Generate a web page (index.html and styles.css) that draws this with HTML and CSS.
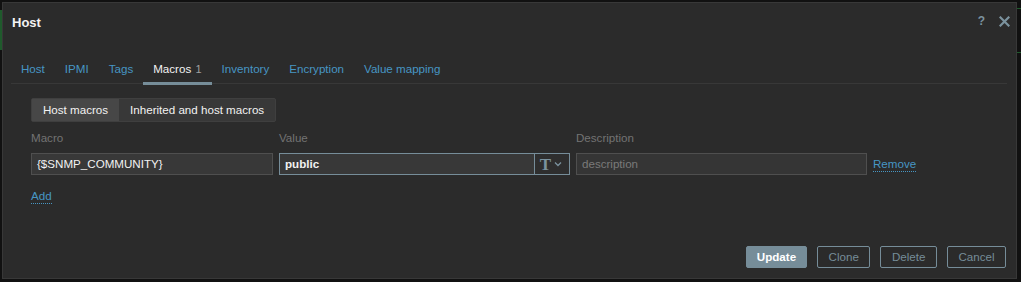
FILE: index.html
```html
<!DOCTYPE html>
<html>
<head>
<meta charset="utf-8">
<link rel="stylesheet" href="styles.css">
</head>
<body>
<div class="bg-line bg-left"></div>
<div class="bg-line bg-right1"></div>
<div class="bg-line bg-right2"></div>
<div class="dialog">
  <div class="header">
    <h4 class="title">Host</h4>
    <div class="header-ctrls">
      <span class="help">?</span>
      <svg class="close" width="11" height="11" viewBox="0 0 11 11"><path d="M1.5 1.5 L9.5 9.5 M9.5 1.5 L1.5 9.5" stroke="#7b929e" stroke-width="2.2" stroke-linecap="square"/></svg>
    </div>
  </div>
  <div class="body">
    <ul class="tabs">
      <li class="tab">Host</li>
      <li class="tab">IPMI</li>
      <li class="tab">Tags</li>
      <li class="tab active">Macros <span class="count">1</span></li>
      <li class="tab">Inventory</li>
      <li class="tab">Encryption</li>
      <li class="tab">Value mapping</li>
    </ul>
    <div class="form">
      <div class="segment">
        <span class="seg seg-on">Host macros</span>
        <span class="seg">Inherited and host macros</span>
      </div>
      <div class="macro-grid">
        <div class="lbl">Macro</div>
        <div class="lbl">Value</div>
        <div class="lbl">Description</div>
        <div></div>
        <div class="input">{$SNMP_COMMUNITY}</div>
        <div class="value-wrap">
          <div class="input value-input">public</div>
          <div class="type-btn">
            <span class="t-glyph">T</span>
            <svg width="8" height="6" viewBox="0 0 8 6"><path d="M1 1.5 L4 4.5 L7 1.5" fill="none" stroke="#7b929e" stroke-width="1.3"/></svg>
          </div>
        </div>
        <div class="input placeholder">description</div>
        <a class="link remove">Remove</a>
      </div>
      <a class="link add">Add</a>
    </div>
  </div>
  <div class="footer">
    <button class="btn primary">Update</button>
    <button class="btn">Clone</button>
    <button class="btn">Delete</button>
    <button class="btn">Cancel</button>
  </div>
</div>
</body>
</html>
```

FILE: styles.css
```css
* { box-sizing: border-box; }
html, body {
  margin: 0;
  padding: 0;
  background: #111111;
  width: 1021px;
  height: 282px;
  overflow: hidden;
  font-family: "Liberation Sans", Arial, sans-serif;
  font-size: 11.6px;
  color: #f2f2f2;
}
body { position: relative; padding: 2px 4px 3px 2px; }
.bg-line { position: absolute; background: #1f5a2c; }
.bg-left { left: 0; top: 10px; width: 2px; height: 40px; }
.bg-right1 { right: 0; top: 8px; width: 4px; height: 1px; }
.bg-right2 { right: 0; top: 52px; width: 4px; height: 1px; }

.dialog {
  position: relative;
  width: 1015px;
  height: 277px;
  background: #2b2b2b;
  border: 1px solid #383838;
  display: flex;
  flex-direction: column;
}
.header {
  display: flex;
  justify-content: space-between;
  align-items: flex-start;
  padding: 11px 6px 0 9px;
  height: 44px;
}
.title {
  margin: 0;
  font-size: 13px;
  font-weight: bold;
  color: #f2f2f2;
  line-height: 18px;
}
.header-ctrls {
  display: flex;
  align-items: center;
  gap: 14px;
  padding-top: 1px;
}
.help {
  color: #7b929e;
  font-size: 12px;
  font-weight: bold;
  line-height: 12px;
}
.close { display: block; }

.body {
  padding: 0 9px 0 8px;
  flex: 1;
}
.tabs {
  list-style: none;
  margin: 0;
  padding: 0;
  display: flex;
  border-bottom: 1px solid #383838;
  height: 37px;
}
.tab {
  padding: 14px 10px 0 10px;
  color: #4796c4;
  line-height: 16px;
  height: 37px;
}
.tab.active {
  color: #f2f2f2;
  border-bottom: 3px solid #768d99;
  height: 38px;
}
.count { color: #a0a0a0; font-size: 11px; margin-left: 1px; }

.form {
  padding: 14px 0 0 20px;
}
.segment {
  display: inline-flex;
  background: #383838;
  border: 1px solid #3f3f3f;
  border-radius: 2px;
  height: 24px;
}
.seg {
  padding: 0 11px;
  line-height: 22px;
  color: #f2f2f2;
}
.seg-on { background: #474747; }

.macro-grid {
  display: grid;
  grid-template-columns: 242px 291px 291px auto;
  column-gap: 6px;
  margin-top: 7px;
  align-items: center;
}
.lbl {
  color: #737373;
  line-height: 17px;
  margin-bottom: 7px;
}
.input {
  height: 22px;
  background: #383838;
  border: 1px solid #4f4f4f;
  padding: 0 5px;
  line-height: 20px;
  color: #f2f2f2;
  white-space: nowrap;
}
.placeholder { color: #7a7a7a; background: #353535; }
.value-wrap { display: flex; height: 22px; }
.value-input {
  flex: 1;
  border-color: #768d99;
  border-right: none;
  font-weight: bold;
}
.type-btn {
  width: 36px;
  height: 22px;
  border: 1px solid #768d99;
  background: #2e2e2e;
  display: flex;
  align-items: center;
  justify-content: center;
  gap: 3px;
  padding-right: 2px;
}
.t-glyph {
  font-family: "Liberation Serif", "Times New Roman", serif;
  font-weight: bold;
  font-size: 17px;
  color: #7b929e;
  line-height: 17px;
}
.link {
  color: #4796c4;
  border-bottom: 1px dotted #4796c4;
  line-height: 14px;
  cursor: pointer;
}
.remove { justify-self: start; }
.add { display: inline-block; margin-top: 14px; }

.footer {
  display: flex;
  justify-content: flex-end;
  gap: 10px;
  padding: 0 10px 10px 0;
}
.btn {
  height: 22px;
  padding: 0 10.5px;
  border: 1px solid #768d99;
  background: transparent;
  color: #768d99;
  font-family: "Liberation Sans", Arial, sans-serif;
  font-size: 11.6px;
  border-radius: 2px;
  line-height: 20px;
}
.btn.primary {
  background: #768d99;
  color: #ffffff;
  font-weight: bold;
  padding: 0 10px;
}
```
